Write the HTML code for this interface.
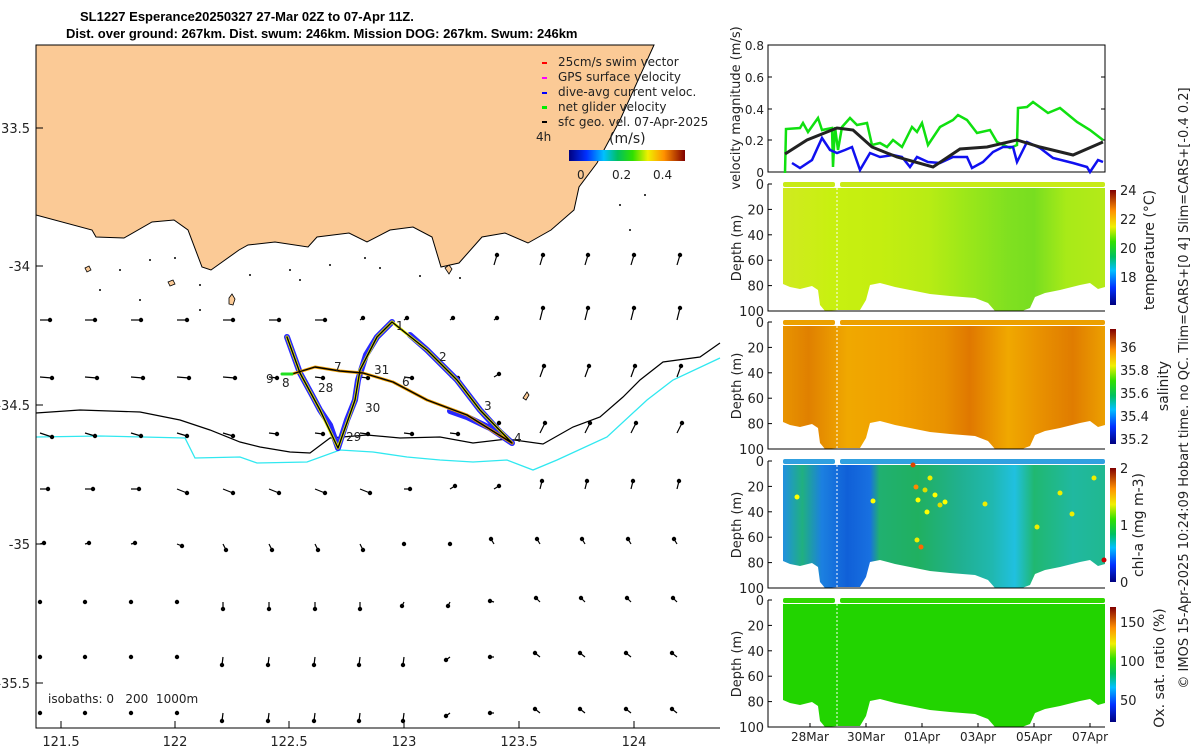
<!DOCTYPE html>
<html><head><meta charset="utf-8"><style>
html,body{margin:0;padding:0;background:#fff;width:1200px;height:750px;overflow:hidden}
svg{display:block}
text{font-family:"DejaVu Sans","Liberation Sans",sans-serif;fill:#222}
.t{font-family:"Liberation Sans",sans-serif;font-weight:bold;font-size:13px;fill:#000}
.s{font-size:12px}
</style></head><body>
<svg id="sv" width="1200" height="750" viewBox="0 0 1200 750" xmlns="http://www.w3.org/2000/svg">
<defs>
<linearGradient id="jetv" x1="0" y1="1" x2="0" y2="0">
<stop offset="0" stop-color="#00007f"/><stop offset="0.15" stop-color="#0030ff"/><stop offset="0.3" stop-color="#00c0ff"/><stop offset="0.42" stop-color="#00c060"/><stop offset="0.55" stop-color="#30e000"/><stop offset="0.68" stop-color="#f0f000"/><stop offset="0.82" stop-color="#ff9000"/><stop offset="1" stop-color="#800000"/>
</linearGradient>
<linearGradient id="jeth" x1="0" y1="0" x2="1" y2="0">
<stop offset="0" stop-color="#00007f"/><stop offset="0.15" stop-color="#0030ff"/><stop offset="0.3" stop-color="#00c0ff"/><stop offset="0.42" stop-color="#00c060"/><stop offset="0.55" stop-color="#30e000"/><stop offset="0.68" stop-color="#f0f000"/><stop offset="0.82" stop-color="#ff9000"/><stop offset="1" stop-color="#800000"/>
</linearGradient>
<linearGradient id="gt" gradientUnits="userSpaceOnUse" x1="783" y1="0" x2="1105" y2="0">
<stop offset="0" stop-color="#d0ea20"/><stop offset="0.15" stop-color="#c8f010"/><stop offset="0.3" stop-color="#c4ee10"/><stop offset="0.45" stop-color="#b8ec14"/><stop offset="0.55" stop-color="#a0e818"/><stop offset="0.7" stop-color="#80e020"/><stop offset="0.78" stop-color="#78de20"/><stop offset="0.88" stop-color="#a8ea18"/><stop offset="1" stop-color="#b4ea18"/>
</linearGradient>
<linearGradient id="gs" gradientUnits="userSpaceOnUse" x1="783" y1="0" x2="1105" y2="0">
<stop offset="0" stop-color="#e89400"/><stop offset="0.08" stop-color="#e08000"/><stop offset="0.2" stop-color="#f0a800"/><stop offset="0.35" stop-color="#f0a000"/><stop offset="0.5" stop-color="#e89000"/><stop offset="0.58" stop-color="#e07800"/><stop offset="0.7" stop-color="#f0a800"/><stop offset="0.8" stop-color="#e89000"/><stop offset="0.9" stop-color="#e07c00"/><stop offset="1" stop-color="#eca000"/>
</linearGradient>
<linearGradient id="gc" gradientUnits="userSpaceOnUse" x1="783" y1="0" x2="1105" y2="0">
<stop offset="0" stop-color="#2090e0"/><stop offset="0.06" stop-color="#20b080"/><stop offset="0.12" stop-color="#1c80e0"/><stop offset="0.2" stop-color="#1060d8"/><stop offset="0.27" stop-color="#1870e0"/><stop offset="0.3" stop-color="#20b070"/><stop offset="0.42" stop-color="#20b060"/><stop offset="0.55" stop-color="#20b090"/><stop offset="0.65" stop-color="#20b8b0"/><stop offset="0.72" stop-color="#20c0e0"/><stop offset="0.78" stop-color="#20b870"/><stop offset="0.9" stop-color="#20b8a0"/><stop offset="1" stop-color="#20b890"/>
</linearGradient>
</defs>

<text class="t" x="80" y="21">SL1227 Esperance20250327 27-Mar 02Z to 07-Apr 11Z.</text>
<text class="t" x="66" y="38">Dist. over ground: 267km. Dist. swum: 246km. Mission DOG: 267km. Swum: 246km</text>

<g>
<path d="M36,45 L654,45 L620,120 L597,163 L579,187 L574,210 L551,230 L528,243 L505,233 L482,237 L459,263 L441,267 L432,237 L413,227 L390,230 L367,242 L349,233 L317,237 L308,247 L275,242 L248,245 L239,250 L211,270 L202,267 L188,230 L174,220 L152,222 L124,238 L96,237 L92,230 L36,215 Z" fill="#fbca96" stroke="#000" stroke-width="1"/>
<path d="M36,413 L80,410 L140,412 L180,420 L210,430 L240,442 L260,447 L290,452 L310,453 L330,438 L367,435 L400,438 L440,437 L473,443 L507,439 L543,444 L573,427 L600,417 L623,397 L640,380 L663,362 L700,357 L720,343" fill="none" stroke="#000" stroke-width="1.2"/>
<path d="M36,437 L100,436 L185,438 L195,458 L240,457 L257,463 L307,462 L340,450 L373,452 L407,457 L440,460 L473,462 L507,460 L533,470 L557,460 L607,437 L647,400 L673,380 L720,358" fill="none" stroke="#30e8f0" stroke-width="1.3"/>
<g id="arrows" stroke="#000" fill="#000" stroke-width="1.2"></g>
<g fill="#fbca96" stroke="#000" stroke-width="0.8">
<path d="M229,298 l3,-4 l3,5 l-2,6 l-4,-1 z"/><path d="M445,268 l4,-3 l3,4 l-3,5 z"/><path d="M523,398 l4,-6 l2,3 l-3,5 z"/><path d="M168,282 l5,-2 l2,4 l-5,2z"/><path d="M85,268 l4,-2 l2,4 l-4,2z"/>
</g>
<g fill="#000">
<circle cx="150" cy="260" r="1"/><circle cx="120" cy="270" r="1"/><circle cx="200" cy="285" r="1"/><circle cx="175" cy="258" r="1"/><circle cx="250" cy="275" r="1"/><circle cx="290" cy="270" r="1"/><circle cx="330" cy="265" r="1"/><circle cx="365" cy="258" r="1"/><circle cx="380" cy="268" r="1"/><circle cx="420" cy="276" r="1"/><circle cx="460" cy="278" r="1"/><circle cx="100" cy="290" r="1"/><circle cx="200" cy="310" r="1"/><circle cx="140" cy="300" r="1"/><circle cx="300" cy="280" r="1"/><circle cx="620" cy="205" r="1"/><circle cx="645" cy="195" r="1"/><circle cx="630" cy="230" r="1"/>
</g>
<g fill="none" stroke-linejoin="round" stroke-linecap="round">
<path d="M287,337 L300,373 L312,395 L320,410 L330,425 L338,448 M338,448 L347,420 L355,400 L358,380 L366,355 L377,337 L392,322 M410,335 L427,350 L457,380 L480,410 L500,432 L512,443 M450,411 L467,417 L490,428 L512,443" stroke="#2828ff" stroke-width="6"/>
<path d="M287,337 L300,373 L320,410 L338,448 L355,400 L360,370 L377,337 L392,322 L427,350 L457,380 L480,410 L512,443" stroke="#e8f000" stroke-width="3"/>
<path d="M292,374 L315,367 L340,371 L363,373 L393,382 L427,400 L467,415 L512,443" stroke="#f0a000" stroke-width="3"/>
<path d="M287,337 L300,373 L320,410 L338,448 L355,400 L360,370 L377,337 L392,322 L427,350 L457,380 L480,410 L512,443 M292,374 L315,367 L340,371 L363,373 L393,382 L427,400 L467,415 L512,443" stroke="#000" stroke-width="1.4"/>
<path d="M282,374 L292,374" stroke="#20e020" stroke-width="3"/>
</g>
<g>
<text x="396" y="330" class="s">1</text><text x="439" y="361" class="s">2</text><text x="484" y="410" class="s">3</text><text x="514" y="442" class="s">4</text><text x="402" y="386" class="s">6</text><text x="334" y="371" class="s">7</text><text x="374" y="374" class="s">31</text><text x="318" y="392" class="s">28</text><text x="365" y="412" class="s">30</text><text x="282" y="387" class="s">8</text><text x="266" y="383" class="s">9</text><text x="346" y="441" class="s">29</text>
</g>
<g>
<rect x="542" y="62" width="5" height="2" fill="#f00"/><text x="558" y="66" class="s">25cm/s swim vector</text>
<rect x="542" y="77" width="5" height="2" fill="#f0f"/><text x="558" y="81" class="s">GPS surface velocity</text>
<rect x="542" y="92" width="5" height="2" fill="#00f"/><text x="558" y="96" class="s">dive-avg current veloc.</text>
<rect x="542" y="106" width="5" height="3" fill="#0e0"/><text x="558" y="111" class="s">net glider velocity</text>
<rect x="542" y="121" width="5" height="2" fill="#000"/><text x="558" y="126" class="s">sfc geo. vel. 07-Apr-2025</text>
<text x="536" y="141" class="s">4h</text>
<text x="609" y="143" font-size="14">(m/s)</text>
<rect x="569" y="150" width="116" height="11" fill="url(#jeth)"/>
<text x="577" y="179" class="s">0</text><text x="612" y="179" class="s">0.2</text><text x="653" y="179" class="s">0.4</text>
</g>
<path d="M36,45 V728 H720" fill="none" stroke="#000" stroke-width="1"/>
<g stroke="#000"><path d="M61,728v-7M175,728v-7M289,728v-7M404,728v-7M519,728v-7M634,728v-7M36,128h7M36,266h7M36,405h7M36,544h7M36,683h7"/></g>
<g font-size="13" text-anchor="middle">
<text x="61" y="746">121.5</text><text x="175" y="746">122</text><text x="289" y="746">122.5</text><text x="404" y="746">123</text><text x="519" y="746">123.5</text><text x="634" y="746">124</text>
</g>
<g font-size="13" text-anchor="end">
<text x="30" y="133">33.5</text><text x="30" y="271">-34</text><text x="30" y="410">-34.5</text><text x="30" y="549">-35</text><text x="30" y="688">-35.5</text>
</g>
<text x="48" y="703" font-size="12">isobaths: 0 &#160;&#160;200 &#160;1000m</text>
</g>

<g>
<rect x="768" y="45" width="337" height="127" fill="none" stroke="#000"/>
<g stroke="#000"><path d="M768,77h4M768,109h4M768,140h4M1105,77h-4M1105,109h-4M1105,140h-4"/></g>
<g font-size="12" text-anchor="end"><text x="764" y="50">0.8</text><text x="764" y="82">0.6</text><text x="764" y="114">0.4</text><text x="764" y="145">0.2</text><text x="764" y="177">0</text></g>
<text transform="translate(740,108) rotate(-90)" font-size="13" text-anchor="middle">velocity magnitude (m/s)</text>
<polyline fill="none" stroke="#10e010" stroke-width="2.5" points="785,173 786,129 800,128 803,123 808,132 818,118 822,130 832,128 833,167 835,127 838,150 842,127 850,118 857,125 867,123 872,145 880,143 887,147 893,140 902,147 912,127 917,132 922,123 928,145 940,127 953,120 958,115 967,120 977,133 990,130 997,142 1010,148 1017,145 1018,108 1027,107 1033,102 1048,113 1060,108 1077,122 1090,130 1103,140"/>
<polyline fill="none" stroke="#1010f0" stroke-width="2.5" points="792,163 800,168 812,160 822,138 830,150 837,153 845,150 852,147 860,170 870,153 880,157 893,155 902,157 910,167 917,157 928,162 940,163 953,157 967,157 972,168 983,162 993,152 1003,147 1013,147 1017,162 1027,142 1040,148 1053,158 1073,163 1087,167 1090,172 1098,160 1103,162"/>
<polyline fill="none" stroke="#222" stroke-width="3" points="785,154 807,140 837,128 853,130 872,147 897,157 933,167 960,149 987,147 1017,140 1040,147 1073,155 1103,142"/>
</g>

<g id="panels"></g>

<rect x="1110" y="190" width="6" height="115" fill="url(#jetv)"/>
<rect x="1110" y="329" width="6" height="115" fill="url(#jetv)"/>
<rect x="1110" y="468" width="6" height="114" fill="url(#jetv)"/>
<rect x="1110" y="607" width="6" height="115" fill="url(#jetv)"/>
<g font-size="13">
<text x="1120" y="195">24</text><text x="1120" y="224">22</text><text x="1120" y="253">20</text><text x="1120" y="282">18</text>
<text x="1120" y="352">36</text><text x="1120" y="375">35.8</text><text x="1120" y="398">35.6</text><text x="1120" y="421">35.4</text><text x="1120" y="444">35.2</text>
<text x="1120" y="473">2</text><text x="1120" y="530">1</text><text x="1120" y="587">0</text>
<text x="1120" y="627">150</text><text x="1120" y="666">100</text><text x="1120" y="705">50</text>
</g>
<g font-size="14" text-anchor="middle">
<text transform="translate(1154,250) rotate(-90)">temperature (°C)</text>
<text transform="translate(1168,386) rotate(-90)">salinity</text>
<text transform="translate(1143,525) rotate(-90)">chl-a (mg m-3)</text>
<text transform="translate(1164,668) rotate(-90)">Ox. sat. ratio (%)</text>
<text transform="translate(1188,388) rotate(-90)" font-size="13">© IMOS 15-Apr-2025 10:24:09 Hobart time. no QC. Tlim=CARS+[0 4] Slim=CARS+[-0.4 0.2]</text>
</g>
<g font-size="12" text-anchor="middle">
<text x="810" y="741">28Mar</text><text x="866" y="741">30Mar</text><text x="922" y="741">01Apr</text><text x="978" y="741">03Apr</text><text x="1034" y="741">05Apr</text><text x="1090" y="741">07Apr</text>
</g>
</svg>
<script>
var NS="http://www.w3.org/2000/svg";
function el(p,n,a){var e=document.createElementNS(NS,n);for(var k in a)e.setAttribute(k,a[k]);p.appendChild(e);return e;}
var ag=document.getElementById('arrows');
var cols=[40,85,131,177,223,269,315,360,404,450,494,540,585,631,677];
function D(r,c){
 if(r==265){return c>=10?[3,-10]:null;}
 if(r==320){if(c<=6)return[10,0];if(c<=10)return[3,-2];return[3,-12];}
 if(r==377){if(c<=4)return[12,1];if(c<=9)return[8,1];if(c==10)return[5,-3];return[4,-11];}
 if(r==433){if(c==0)return[12,4];if(c<=4)return[10,3];if(c<=9)return[8,1];return[5,-10];}
 if(r==489){if(c<=2)return[8,0];if(c<=7)return[10,4];if(c==8)return[6,0];if(c<=10)return[5,-3];return[2,-8];}
 if(r==544){if(c<=2)return[4,-1];if(c==3)return[5,2];if(c<=7)return[3,6];if(c<=9)return[0,0];return[-3,-5];}
 if(r==602){if(c<=3)return[0,0];if(c<=7)return[0,7];if(c<=9)return[-2,4];if(c==10)return[-4,-1];return[-4,-4];}
 if(c<=3)return[0,0];if(c<=8)return[-1,8];if(c==9)return[-4,3];if(c==10)return[-4,0];return[-5,-4];
}
[265,320,377,433,489,544,602,657,713].forEach(function(r){cols.forEach(function(x,c){var d=D(r,c);if(!d)return;
 el(ag,'line',{x1:x,y1:r,x2:x+d[0],y2:r+d[1]});el(ag,'circle',{cx:x+d[0],cy:r+d[1],r:1.6});});});
var P=document.getElementById('panels');
var body="M783,188 L1105,188 L1105,287 L1098,289 L1090,283 L1080,285 L1060,290 L1045,293 L1035,297 L1030,308 L1022,311 L995,311 L988,303 L975,298 L950,296 L930,294 L910,290 L895,287 L880,283 L870,285 L866,300 L860,310 L838,310 L825,311 L820,305 L818,290 L812,286 L800,289 L790,287 L783,284 Z";
var offs=[[0,'url(#gt)','#c8ea18'],[138,'url(#gs)','#eca000'],[277,'url(#gc)','#30a0e0'],[416,'#22d400','#30d800']];
offs.forEach(function(o,i){
 var g=el(P,'g',{transform:'translate(0,'+o[0]+')'});
 el(g,'path',{d:body,fill:o[1]});
 el(g,'rect',{x:783,y:182,width:52,height:5,fill:o[2],rx:2});
 el(g,'rect',{x:840,y:182,width:265,height:5,fill:o[2],rx:2});
 el(g,'line',{x1:837,y1:188,x2:837,y2:311,stroke:'#fff','stroke-width':1,'stroke-dasharray':'2,2'});
 el(g,'path',{d:'M768,184 V311 H1105',fill:'none',stroke:'#000'});
 [0,20,40,60,80,100].forEach(function(v){var y=184+v*1.27;
  el(g,'line',{x1:768,y1:y,x2:772,y2:y,stroke:'#000'});
  var t=el(g,'text',{x:764,y:y+5,'font-size':13,'text-anchor':'end'});t.textContent=v;});
 var t=el(g,'text',{transform:'translate(741,248) rotate(-90)','font-size':13,'text-anchor':'middle'});t.textContent='Depth (m)';
});
var cg=el(P,'g',{});
[[797,497,'#ff0'],[873,501,'#ff0'],[916,487,'#f80'],[918,500,'#ff0'],[925,490,'#dd0'],[930,478,'#ee0'],[935,495,'#ff0'],[940,505,'#dd0'],[927,512,'#ff0'],[921,547,'#f60'],[917,540,'#ee0'],[945,502,'#ff0'],[985,504,'#ee0'],[1060,493,'#ee0'],[1072,514,'#ee0'],[1037,527,'#ee0'],[1094,478,'#ee0'],[1104,560,'#c00'],[913,465,'#d40']].forEach(function(d){el(cg,'circle',{cx:d[0],cy:d[1],r:2.5,fill:d[2]});});
[810,866,922,978,1034,1090].forEach(function(x){el(P,'line',{x1:x,y1:727,x2:x,y2:723,stroke:'#000'});});
</script>
</body></html>
